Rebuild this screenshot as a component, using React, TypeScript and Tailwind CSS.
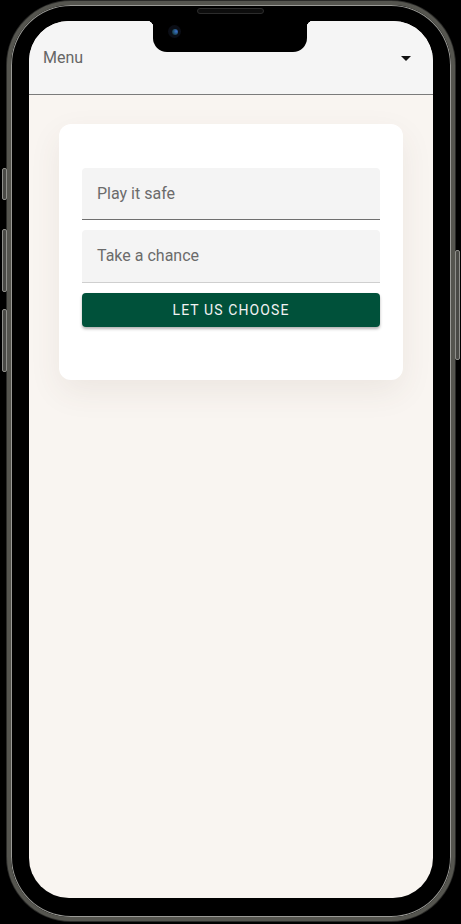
import React from 'react';

const btn = 'w-[5px] rounded-[2px] bg-[#4a4a46] border border-[#8f8f8b]';

function TextField({ label, strong }: { label: string; strong?: boolean }) {
  return (
    <div
      className={`flex items-center pl-[15px] bg-[#f4f4f4] rounded-t-[4px] border-b text-[16px] text-[#6b6b6b] ${
        strong ? 'h-[52px] border-[#6f6f6f]' : 'h-[53px] border-[#cfcfcf]'
      }`}
    >
      {label}
    </div>
  );
}

export default function App() {
  return (
    <div
      className="min-h-[924px] bg-black pt-[1px] pl-[7px]"
      style={{ fontFamily: 'Roboto, "Liberation Sans", sans-serif' }}
    >
      <div className="relative w-[448px] h-[920px] rounded-[64px] border-[4px] border-[#55554f] bg-black pt-[16px] px-[18px] pb-[19px] shadow-[inset_0_0_0_1px_#9a9a96,0_0_0_1px_#2a2a28]">
        {/* side buttons */}
        <div className="absolute left-[-9px] top-[163px] flex flex-col gap-[29px]">
          <div className={`${btn} h-[32px]`} />
          <div className="flex flex-col gap-[17px]">
            <div className={`${btn} h-[63px]`} />
            <div className={`${btn} h-[63px]`} />
          </div>
        </div>
        <div className={`absolute right-[-9px] top-[245px] h-[110px] ${btn}`} />

        {/* speaker */}
        <div className="absolute left-[186px] top-[3px] w-[67px] h-[6px] rounded-full bg-[#0d0d0d] border border-[#2c2c2c]" />

        <div className="relative h-full overflow-hidden rounded-[40px] bg-[#f9f5f1] flex flex-col">
          {/* notch */}
          <div className="absolute top-0 left-[118px] flex">
            <div className="w-[6px] h-[6px] bg-[radial-gradient(circle_at_0_100%,transparent_6px,#000_6.5px)]" />
            <div className="w-[154px] h-[31px] bg-black rounded-b-[14px] pl-[15px] pt-[4px]">
              <div className="w-[13px] h-[13px] rounded-full bg-[#0b0e16] flex items-center justify-center">
                <div className="w-[6px] h-[6px] rounded-full bg-[radial-gradient(circle_at_70%_40%,#3b6fd0,#1d4a5a_60%,#0b0e16)]" />
              </div>
            </div>
            <div className="w-[6px] h-[6px] bg-[radial-gradient(circle_at_100%_100%,transparent_6px,#000_6.5px)]" />
          </div>

          <header className="h-[74px] shrink-0 bg-[#f5f5f5] border-b border-[#7b7b7b] flex items-center justify-between pl-[14px] pr-[22px]">
            <span className="text-[16px] text-[#666666]">Menu</span>
            <svg width="10" height="5" viewBox="0 0 10 5" className="mt-[1px]">
              <path d="M0 0 L10 0 L5 5 Z" fill="#111" />
            </svg>
          </header>

          <main className="flex-1 px-[30px] pt-[29px]">
            <div className="h-[256px] bg-white rounded-[12px] px-[23px] pt-[44px] flex flex-col gap-[10px] shadow-[0_12px_32px_rgba(90,70,50,0.08)]">
              <TextField label="Play it safe" strong />
              <TextField label="Take a chance" />
              <button className="h-[34px] rounded-[4px] bg-[#00513a] text-[#f2f2f2] text-[14px] font-normal tracking-[1.1px] shadow-[0_2px_3px_rgba(0,0,0,0.3)]">
                LET US CHOOSE
              </button>
            </div>
          </main>
        </div>
      </div>
    </div>
  );
}
